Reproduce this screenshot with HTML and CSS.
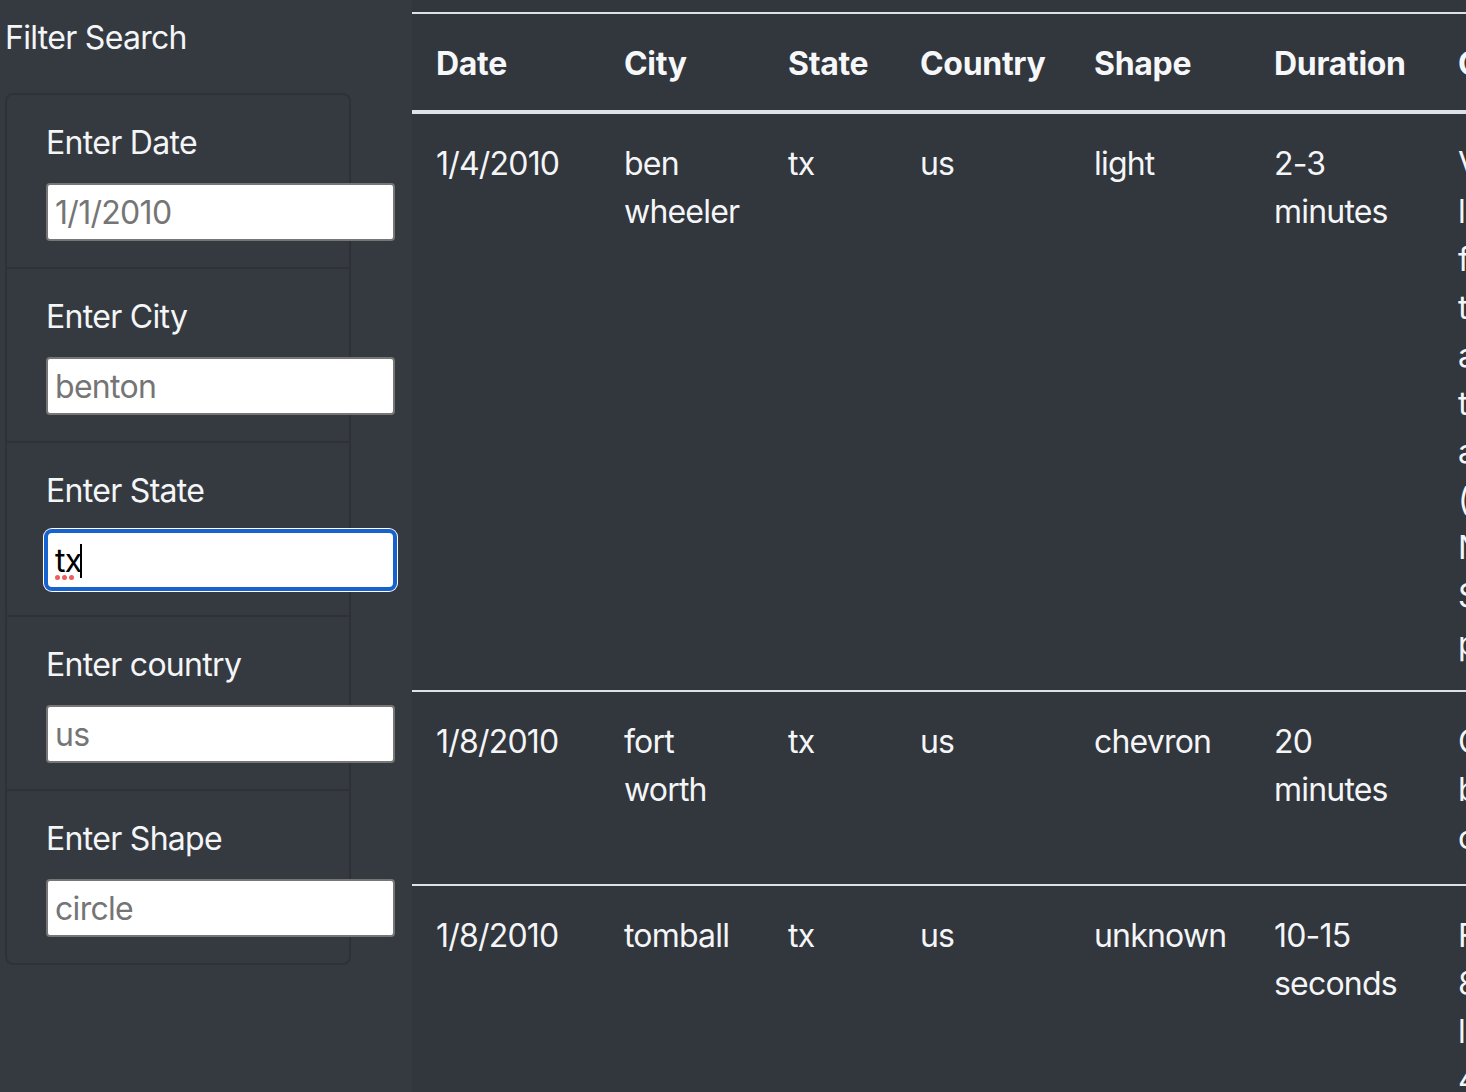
FILE: index.html
```html
<!DOCTYPE html>
<html lang="en">
<head>
<meta charset="utf-8">
<title>UFO Sightings</title>
<link rel="stylesheet" href="styles.css">
</head>
<body>
<div class="page">
  <aside class="sidebar">
    <h2 class="sidebar-title">Filter Search</h2>
    <ul class="filters">
      <li class="filter">
        <label class="filter-label" for="datetime">Enter Date</label>
        <input class="filter-input" id="datetime" type="text" placeholder="1/1/2010">
      </li>
      <li class="filter">
        <label class="filter-label" for="city">Enter City</label>
        <input class="filter-input" id="city" type="text" placeholder="benton">
      </li>
      <li class="filter">
        <label class="filter-label" for="state">Enter State</label>
        <div class="input-wrap">
          <input class="filter-input is-focused" id="state" type="text" value="tx" spellcheck="false">
          <span class="caret"></span>
          <span class="spell-dots"><i></i><i></i><i></i></span>
        </div>
      </li>
      <li class="filter">
        <label class="filter-label" for="country">Enter country</label>
        <input class="filter-input" id="country" type="text" placeholder="us">
      </li>
      <li class="filter">
        <label class="filter-label" for="shape">Enter Shape</label>
        <input class="filter-input" id="shape" type="text" placeholder="circle">
      </li>
    </ul>
  </aside>
  <main class="results">
    <table class="ufo-table">
      <colgroup>
        <col class="c-date"><col class="c-city"><col class="c-state"><col class="c-country"><col class="c-shape"><col class="c-duration"><col class="c-comments">
      </colgroup>
      <thead>
        <tr>
          <th>Date</th><th>City</th><th>State</th><th>Country</th><th>Shape</th><th>Duration</th><th>Comments</th>
        </tr>
      </thead>
      <tbody>
        <tr>
          <td>1/4/2010</td><td>ben wheeler</td><td>tx</td><td>us</td><td>light</td><td>2-3 minutes</td>
          <td>Very bright<br>light moving<br>fast across<br>the sky to<br>a point then<br>turned and<br>accelerated<br>((NUFORC<br>Note:<br>Source is<br>private. PD))</td>
        </tr>
        <tr>
          <td>1/8/2010</td><td>fort worth</td><td>tx</td><td>us</td><td>chevron</td><td>20 minutes</td>
          <td>Chevron of<br>bright lights<br>cruising low.</td>
        </tr>
        <tr>
          <td>1/8/2010</td><td>tomball</td><td>tx</td><td>us</td><td>unknown</td><td>10-15 seconds</td>
          <td>Four lights<br>8 seconds<br>low in sky<br>45 degrees<br>then gone.</td>
        </tr>
      </tbody>
    </table>
  </main>
</div>
</body>
</html>
```

FILE: styles.css
```css
* { box-sizing: border-box; }

html, body {
  margin: 0;
  padding: 0;
  height: 100%;
}

body {
  background: #353a41;
  color: #f4f5f7;
  font-family: Inter, "Noto Sans", "Liberation Sans", sans-serif;
  font-size: 32px;
  line-height: 48px;
  letter-spacing: -0.7px;
  overflow: hidden;
}

.page {
  display: flex;
  min-height: 100%;
}

.sidebar {
  flex: 0 0 412px;
  padding: 14px 0 0 5px;
}

.sidebar-title {
  margin: 0 0 31px;
  font-size: 32px;
  font-weight: 400;
  line-height: 48px;
}

.filters {
  list-style: none;
  margin: 0;
  padding: 0;
  width: 346px;
  border: 2px solid #2e3238;
  border-radius: 8px;
}

.filter {
  padding: 24px 40px 26px 39px;
  border-bottom: 2px solid #2e3238;
}

.filter:last-child {
  border-bottom: 0;
}

.filter-label {
  display: block;
  margin-bottom: 16px;
}

.filter-input {
  display: block;
  width: 349px;
  height: 58px;
  margin: 0 -44px 0 0;
  padding: 0 7px;
  border: 2px solid #767676;
  border-radius: 4px;
  background: #fff;
  color: #000;
  font-family: inherit;
  font-size: 32px;
  letter-spacing: -0.7px;
  outline: none;
}

.filter-input::placeholder {
  color: #757575;
  opacity: 1;
}

.input-wrap {
  position: relative;
  width: 349px;
}

.filter-input.is-focused {
  border: 2px solid #1663cf;
  border-radius: 6px;
  box-shadow: 0 0 0 2px #1663cf, 0 0 0 3px #ffffff;
}

.caret {
  position: absolute;
  left: 34px;
  top: 13px;
  width: 2px;
  height: 34px;
  background: #000;
}

.spell-dots {
  position: absolute;
  left: 9px;
  top: 44px;
  display: flex;
  gap: 2px;
}

.spell-dots i {
  width: 5px;
  height: 5px;
  border-radius: 50%;
  background: #f05b5b;
}

.results {
  flex: 1 1 auto;
  background: #32363d;
  overflow: hidden;
  padding-top: 12px;
}

.ufo-table {
  border-collapse: collapse;
  table-layout: fixed;
  width: 1362px;
}

.c-date { width: 188px; }
.c-city { width: 164px; }
.c-state { width: 132px; }
.c-country { width: 174px; }
.c-shape { width: 180px; }
.c-duration { width: 184px; }
.c-comments { width: 340px; }

.ufo-table th,
.ufo-table td {
  padding: 26px 24px 22px;
  text-align: left;
  vertical-align: top;
  border-top: 2px solid #dee2e6;
}

.ufo-table th {
  font-weight: 700;
  letter-spacing: -0.3px;
  border-bottom: 4px solid #dee2e6;
  color: #f6f7f8;
}

.ufo-table td {
  letter-spacing: -0.8px;
}

.ufo-table thead + tbody tr:first-child td {
  border-top: 0;
}
```
